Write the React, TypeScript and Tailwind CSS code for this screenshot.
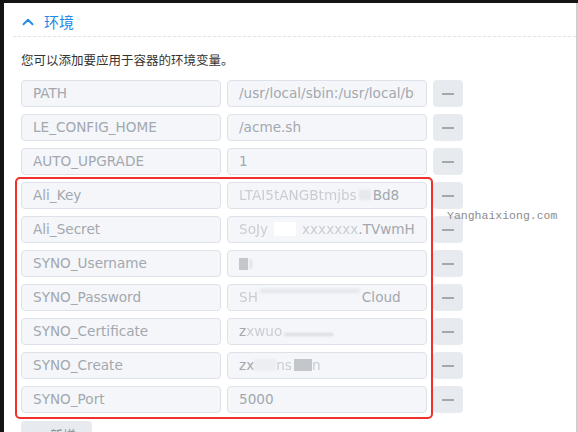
import { ChevronUp } from "lucide-react";
import type { ReactNode } from "react";

const latin = "font-['DejaVu_Sans','Noto_Sans_CJK_SC',sans-serif]";
const inputBase =
  "flex h-[27px] w-[200px] shrink-0 items-center rounded-[4px] border border-[#dde2ea] bg-[#f4f6fa] px-[11px] text-[13.6px] text-[#a3a8ae]";

type Row = { name: string; value: ReactNode };

const Faded = ({ children }: { children: ReactNode }) => (
  <span className="text-[#c9cdd3] blur-[0.7px]">{children}</span>
);

const rows: Row[] = [
  { name: "PATH", value: "/usr/local/sbin:/usr/local/bin:/usr/bin" },
  { name: "LE_CONFIG_HOME", value: "/acme.sh" },
  { name: "AUTO_UPGRADE", value: "1" },
  {
    name: "Ali_Key",
    value: (
      <>
        <Faded>LTAI5tANGBtmjbs</Faded>
        <span className="mx-[2px] inline-block h-[10px] w-[12px] bg-[#e6e8ec] blur-[1px]" />
        <span>Bd8</span>
      </>
    ),
  },
  {
    name: "Ali_Secret",
    value: (
      <>
        <Faded>SoJy</Faded>
        <span className="mx-[6px] inline-block h-[14px] w-[22px] bg-white" />
        <Faded>xxxxxxx</Faded>
        <span>.TVwmH</span>
      </>
    ),
  },
  {
    name: "SYNO_Username",
    value: (
      <>
        <span className="inline-block h-[12px] w-[9px] bg-[#c3c6cb]" />
        <span className="ml-[1px] inline-block h-[10px] w-[4px] bg-[#e4e6ea] blur-[1px]" />
      </>
    ),
  },
  {
    name: "SYNO_Password",
    value: (
      <>
        <Faded>SH</Faded>
        <span className="mx-[2px] inline-block h-[4px] w-[100px] -translate-y-[6px] rounded-full bg-[#e2e5ea] blur-[1.5px]" />
        <span>Cloud</span>
      </>
    ),
  },
  {
    name: "SYNO_Certificate",
    value: (
      <>
        <span>z</span>
        <Faded>xwuo</Faded>
        <span className="ml-[2px] inline-block h-[3px] w-[50px] translate-y-[3px] rounded-full bg-[#d9dce1] blur-[1px]" />
      </>
    ),
  },
  {
    name: "SYNO_Create",
    value: (
      <>
        <span>zx</span>
        <span className="inline-block h-[12px] w-[22px] bg-[#eceef1] blur-[1px]" />
        <Faded>ns</Faded>
        <span className="ml-[2px] inline-block h-[12px] w-[18px] bg-[#c3c6cb]" />
        <Faded>n</Faded>
      </>
    ),
  },
  { name: "SYNO_Port", value: "5000" },
];

function MinusButton() {
  return (
    <div className="flex h-[27px] w-[30px] shrink-0 items-center justify-center rounded-[4px] bg-[#e7ebf0]">
      <span className="h-[2px] w-[12px] bg-[#a4a8ad]" />
    </div>
  );
}

export default function App() {
  return (
    <div className="flex h-[432px] w-[578px] overflow-hidden bg-[#141414] pl-[4px] pt-[3px]">
      <div className="relative flex-1 border-r-2 border-[#cfcfcf] bg-white">
        {/* header */}
        <div className="ml-[9px] flex h-[34px] items-center gap-[7px] border-b border-dashed border-[#dfe3ea] pl-[6px] pt-[5px]">
          <ChevronUp size={18} strokeWidth={2.4} className="text-[#1f8ae8]" />
          <span className="font-['Noto_Sans_CJK_SC',sans-serif] text-[15px] text-[#1f8ae8]">
            环境
          </span>
        </div>

        <div className="px-[17px] pt-[13px]">
          <p className="font-['Noto_Sans_CJK_SC',sans-serif] text-[12.5px] leading-[20px] text-[#333]">
            您可以添加要应用于容器的环境变量。
          </p>

          <div className={`mt-[10px] flex flex-col gap-[7px] ${latin}`}>
            {rows.map((r) => (
              <div key={r.name} className="flex items-center gap-[6px]">
                <div className={inputBase}>
                  <span className="overflow-hidden whitespace-nowrap">{r.name}</span>
                </div>
                <div className={inputBase}>
                  <span className="flex min-w-0 items-center overflow-hidden whitespace-nowrap">
                    {r.value}
                  </span>
                </div>
                <MinusButton />
              </div>
            ))}
          </div>

          <button className="mt-[8px] flex h-[27px] w-[71px] items-center justify-center gap-[6px] rounded-[4px] bg-[#e7ebf0] font-['Noto_Sans_CJK_SC',sans-serif] text-[13px] text-[#8a8f96]">
            <span>+</span>
            <span>新增</span>
          </button>
        </div>

        {/* red highlight */}
        <div className="pointer-events-none absolute left-[11px] top-[174px] h-[242px] w-[418px] rounded-[5px] border-2 border-[#f0302b]" />

        {/* watermark */}
        <div className="absolute left-[443px] top-[204px] font-['Liberation_Mono',monospace] text-[11.5px] text-[#8c8c8c]">
          Yanghaixiong.com
        </div>
      </div>
    </div>
  );
}
